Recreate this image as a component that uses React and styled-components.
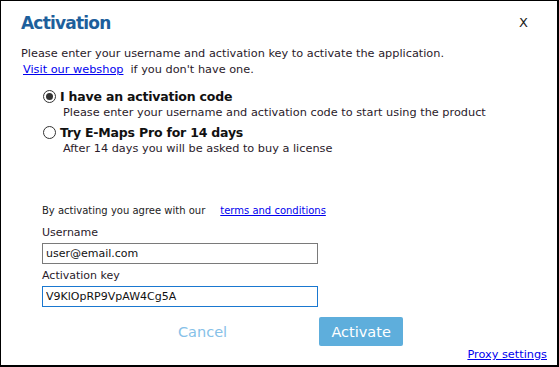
import React from 'react'
import styled, { createGlobalStyle } from 'styled-components'

const Global = createGlobalStyle`
  html, body {
    margin: 0;
    padding: 0;
    background: #fff;
  }
  body {
    font-family: "DejaVu Sans", Verdana, sans-serif;
    color: #1a1a1a;
  }
`;

const Window = styled.div`
  box-sizing: border-box;
  width: 559px;
  height: 367px;
  border: 1px solid #000;
  border-right-width: 2px;
  border-bottom-width: 2px;
  display: flex;
  flex-direction: column;
  padding: 10px 10px 0 20px;
`;

const Header = styled.div`
  display: flex;
  justify-content: space-between;
  align-items: flex-start;
  height: 35px;
`;

const Title = styled.div`
  font-size: 17px;
  font-weight: 700;
  letter-spacing: -0.8px;
  color: #1d5f9c;
  margin-top: 2px;
`;

const Close = styled.div`
  font-size: 13px;
  color: #222;
  margin: 4px 19px 0 0;
  cursor: pointer;
`;

const Text = styled.div`
  font-size: 11.3px;
  color: #2a1a2a;
  line-height: 16px;
`;

const Link = styled.a`
  color: #0000ee;
  text-decoration: underline;
  margin: 0 7px 0 2px;
  cursor: pointer;
`;

const Options = styled.div`
  display: flex;
  flex-direction: column;
  margin: 10px 0 0 22px;
`;

const OptionRow = styled.label`
  display: flex;
  align-items: center;
  gap: 4px;
  font-size: 12.5px;
  font-weight: 700;
  letter-spacing: -0.2px;
  color: #111;
  line-height: 17px;
`;

const Radio = styled.span`
  box-sizing: border-box;
  width: 13px;
  height: 13px;
  border-radius: 50%;
  border: 1px solid #333;
  display: inline-flex;
  align-items: center;
  justify-content: center;
  &::after {
    content: '';
    width: 7px;
    height: 7px;
    border-radius: 50%;
    background: ${({ $checked }) => ($checked ? '#333' : 'transparent')};
  }
`;

const OptionDesc = styled.div`
  font-size: 11.3px;
  color: #2a1a2a;
  margin: 0 0 4px 20px;
  line-height: 15px;
`;

const Form = styled.div`
  display: flex;
  flex-direction: column;
  margin: 44px 0 0 21px;
`;

const Small = styled.div`
  font-size: 10px;
  color: #222;
  line-height: 14px;
  margin-bottom: 8px;
  & a {
    margin-left: 15px;
  }
`;

const Label = styled.div`
  font-size: 11px;
  color: #2a1a2a;
  line-height: 14px;
  margin-bottom: 3px;
`;

const Input = styled.input`
  box-sizing: border-box;
  width: 276px;
  height: 21px;
  border: 1px solid ${({ $focused }) => ($focused ? '#1a78d0' : '#7a7a7a')};
  padding: 0 3px;
  font-family: "DejaVu Sans", Verdana, sans-serif;
  font-size: 11px;
  color: #111;
  margin-bottom: 5px;
  outline: none;
`;

const Buttons = styled.div`
  display: flex;
  align-items: center;
  margin: 5px 0 0 136px;
`;

const GhostButton = styled.button`
  background: none;
  border: none;
  font-family: "DejaVu Sans", Verdana, sans-serif;
  font-size: 14.5px;
  color: #86c1e8;
  padding: 0;
  margin-right: 92px;
`;

const PrimaryButton = styled.button`
  background: #5eaedc;
  border: none;
  border-radius: 2px;
  color: #fff;
  font-family: "DejaVu Sans", Verdana, sans-serif;
  font-size: 14.5px;
  width: 84px;
  height: 29px;
  padding: 0;
`;

const Footer = styled.div`
  display: flex;
  justify-content: flex-end;
  margin-top: 1px;
  font-size: 11.3px;
  line-height: 16px;
  & a {
    margin: 0;
  }
`;

export default function App() {
  return (
    <>
      <Global />
      <Window>
        <Header>
          <Title>Activation</Title>
          <Close>X</Close>
        </Header>
        <Text>Please enter your username and activation key to activate the application.</Text>
        <Text>
          <Link>Visit our webshop</Link>if you don't have one.
        </Text>
        <Options>
          <OptionRow>
            <Radio $checked />
            I have an activation code
          </OptionRow>
          <OptionDesc>Please enter your username and activation code to start using the product</OptionDesc>
          <OptionRow>
            <Radio />
            Try E-Maps Pro for 14 days
          </OptionRow>
          <OptionDesc>After 14 days you will be asked to buy a license</OptionDesc>
        </Options>
        <Form>
          <Small>
            By activating you agree with our<Link>terms and conditions</Link>
          </Small>
          <Label>Username</Label>
          <Input defaultValue="user@email.com" />
          <Label>Activation key</Label>
          <Input $focused defaultValue="V9KlOpRP9VpAW4Cg5A" />
          <Buttons>
            <GhostButton>Cancel</GhostButton>
            <PrimaryButton>Activate</PrimaryButton>
          </Buttons>
        </Form>
        <Footer>
          <Link>Proxy settings</Link>
        </Footer>
      </Window>
    </>
  )
}
